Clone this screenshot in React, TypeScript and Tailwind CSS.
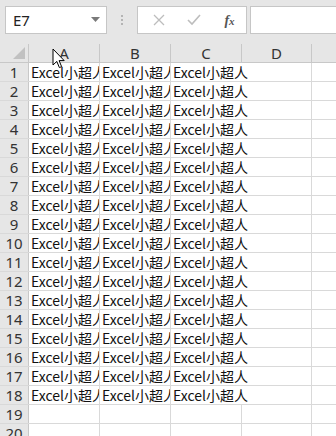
import React from "react";

const FONT = '"Noto Sans CJK SC", "Noto Sans", sans-serif';
const HFONT = '"Noto Sans", "Open Sans", sans-serif';
const TXT = "Excel小超人";

function Cursor() {
  return (
    <svg className="absolute left-[52px] top-[48px]" width="14" height="22" viewBox="0 0 14 22">
      <path d="M1 1 L1 17 L4.8 13.4 L7.4 19.6 L9.6 18.6 L7.1 12.6 L12.2 12.6 Z" fill="#ffffff" stroke="#000000" strokeWidth="1" strokeLinejoin="miter" />
    </svg>
  );
}

export default function App() {
  const rows = Array.from({ length: 20 }, (_, i) => i + 1);
  return (
    <div className="relative w-[336px] h-[436px] overflow-hidden bg-white" style={{ fontFamily: FONT }}>
      {/* toolbar */}
      <div className="h-[44px] bg-[#e6e6e6] flex items-start pt-[6px] pl-[5px]">
        <div className="w-[102px] h-[28px] bg-white border border-[#c6c6c6] flex items-center justify-between pl-[7px] pr-[6px]">
          <span className="text-[15px] text-[#222]" style={{ fontFamily: HFONT }}>E7</span>
          <svg width="9" height="6" viewBox="0 0 9 6"><path d="M0 0 L9 0 L4.5 5 Z" fill="#7a7a7a" /></svg>
        </div>
        <div className="w-[30px] h-[28px] flex flex-col items-center justify-center gap-[2px]">
          <div className="w-[2px] h-[2px] bg-[#b4b4b4]" />
          <div className="w-[2px] h-[2px] bg-[#b4b4b4]" />
          <div className="w-[2px] h-[2px] bg-[#b4b4b4]" />
        </div>
        <div className="w-[110px] h-[28px] bg-white border border-[#c6c6c6] flex items-center">
          <div className="w-[37px] flex justify-center pl-[4px]">
            <svg width="12" height="12" viewBox="0 0 12 12"><path d="M1 1 L11 11 M11 1 L1 11" stroke="#bdbdbd" strokeWidth="1.3" /></svg>
          </div>
          <div className="w-[38px] flex justify-center">
            <svg width="14" height="12" viewBox="0 0 14 12"><path d="M1 6 L5 10 L13 1" stroke="#bdbdbd" strokeWidth="1.6" fill="none" /></svg>
          </div>
          <div className="w-[33px] flex justify-center">
            <span className="text-[14px] italic text-[#555] font-semibold" style={{ fontFamily: '"Liberation Serif", serif' }}>
              f<span className="text-[11px]">x</span>
            </span>
          </div>
        </div>
        <div className="ml-[3px] flex-1 h-[28px] bg-white border border-[#c6c6c6] border-r-0" />
      </div>

      {/* column header */}
      <div className="h-[19px] flex bg-[#e6e6e6] border-b border-[#c8c8c8] text-[15px] text-[#333]" style={{ fontFamily: HFONT }}>
        <div className="w-[29px] shrink-0 border-r border-[#c8c8c8] relative">
          <svg className="absolute right-[3px] bottom-[3px]" width="12" height="12" viewBox="0 0 12 12"><path d="M12 0 L12 12 L0 12 Z" fill="#c1c1c1" /></svg>
        </div>
        {["A", "B", "C"].map((c) => (
          <div key={c} className="w-[71px] shrink-0 border-r border-[#c8c8c8] flex items-center justify-center leading-[18px]">{c}</div>
        ))}
        <div className="w-[70px] shrink-0 border-r border-[#c8c8c8] flex items-center justify-center leading-[18px]">D</div>
        <div className="flex-1" />
      </div>

      {rows.map((r) => {
        const filled = r <= 18;
        return (
          <div key={r} className="h-[19px] flex border-b border-[#d9d9d9]">
            <div className="w-[29px] shrink-0 bg-[#e6e6e6] border-r border-[#c8c8c8] flex items-center justify-center text-[15px] text-[#333] leading-[18px]" style={{ fontFamily: HFONT }}>
              {r}
            </div>
            <div className="w-[71px] shrink-0 border-r border-[#d9d9d9] overflow-hidden whitespace-nowrap pl-[2px] text-[14px] leading-[18px] text-[#111]">
              {filled ? TXT : ""}
            </div>
            <div className="w-[71px] shrink-0 border-r border-[#d9d9d9] overflow-hidden whitespace-nowrap pl-[2px] text-[14px] leading-[18px] text-[#111]">
              {filled ? TXT : ""}
            </div>
            {filled ? (
              <div className="w-[141px] shrink-0 border-r border-[#d9d9d9] whitespace-nowrap pl-[2px] text-[14px] leading-[18px] text-[#111]">
                {TXT}
              </div>
            ) : (
              <>
                <div className="w-[71px] shrink-0 border-r border-[#d9d9d9]" />
                <div className="w-[70px] shrink-0 border-r border-[#d9d9d9]" />
              </>
            )}
            <div className="flex-1" />
          </div>
        );
      })}
      <Cursor />
    </div>
  );
}
